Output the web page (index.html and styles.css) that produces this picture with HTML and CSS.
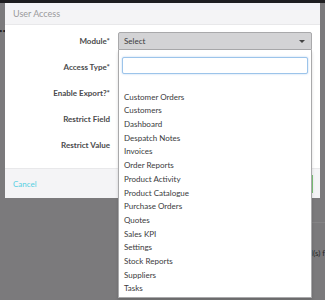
FILE: index.html
```html
<!DOCTYPE html>
<html>
<head>
<meta charset="utf-8">
<link rel="stylesheet" href="styles.css">
</head>
<body>
<div class="topbar"></div>
<div class="page-bg">
  <span class="bg-dots">••</span>
  <span class="bg-text">l(s) f</span>
  <div class="bg-line"></div>
</div>
<div class="modal">
  <div class="modal-header">User Access</div>
  <div class="modal-body">
    <div class="row">
      <label class="lbl">Module*</label>
      <div class="select"><span>Select</span><span class="caret"></span></div>
    </div>
    <div class="row">
      <label class="lbl">Access Type*</label>
      <div class="field"></div>
    </div>
    <div class="row">
      <label class="lbl">Enable Export?*</label>
      <div class="field"></div>
    </div>
    <div class="row">
      <label class="lbl">Restrict Field</label>
      <div class="field"></div>
    </div>
    <div class="row">
      <label class="lbl">Restrict Value</label>
      <div class="field"></div>
    </div>
  </div>
  <div class="modal-footer">
    <a class="cancel">Cancel</a>
    <button class="save">Save</button>
  </div>
  <div class="dropdown">
    <div class="search-wrap"><input class="search" type="text"></div>
    <ul class="options">
      <li>&nbsp;</li>
      <li>Customer Orders</li>
      <li>Customers</li>
      <li>Dashboard</li>
      <li>Despatch Notes</li>
      <li>Invoices</li>
      <li>Order Reports</li>
      <li>Product Activity</li>
      <li>Product Catalogue</li>
      <li>Purchase Orders</li>
      <li>Quotes</li>
      <li>Sales KPI</li>
      <li>Settings</li>
      <li>Stock Reports</li>
      <li>Suppliers</li>
      <li>Tasks</li>
    </ul>
  </div>
</div>
</body>
</html>
```
FILE: styles.css
```css
* { box-sizing: border-box; }
html, body {
  margin: 0;
  padding: 0;
  width: 325px;
  height: 300px;
  overflow: hidden;
  background: #7b7a7c;
  font-family: Lato, "Open Sans", sans-serif;
}
.topbar {
  height: 3px;
  background: #1e1e20;
}
.page-bg {
  position: absolute;
  inset: 3px 0 0 0;
}
.bg-dots {
  position: absolute;
  left: -1px;
  top: 24px;
  font-size: 6px;
  color: #222;
}
.bg-text {
  position: absolute;
  left: 311px;
  top: 245px;
  font-size: 8px;
  color: #2a2a2a;
  white-space: nowrap;
}
.bg-line {
  position: absolute;
  left: 312px;
  right: 0;
  top: 219px;
  height: 1px;
  background: #858486;
}
.modal {
  position: absolute;
  left: 5px;
  top: 3px;
  width: 315px;
  background: #fff;
}
.modal-header {
  height: 22px;
  background: #f4f4f6;
  border-bottom: 1px solid #e8e8ea;
  color: #9a9a9c;
  font-size: 9px;
  line-height: 21px;
  padding-left: 8px;
}
.modal-body {
  display: flex;
  flex-direction: column;
  gap: 8px;
  padding: 7px 8px 14px 0;
}
.row {
  display: flex;
  align-items: center;
  height: 18px;
}
.lbl {
  width: 105px;
  text-align: right;
  font-size: 8px;
  font-weight: 700;
  color: #4a4a4c;
  margin-right: 8px;
}
.select {
  flex: 1;
  height: 18px;
  background: #d3d3d5;
  border: 1px solid #a9a9ab;
  border-radius: 2px 2px 0 0;
  display: flex;
  align-items: center;
  justify-content: space-between;
  padding: 0 4px 0 5px;
  font-size: 8px;
  color: #3a3a3c;
}
.caret {
  width: 0;
  height: 0;
  border-left: 3px solid transparent;
  border-right: 3px solid transparent;
  border-top: 3px solid #444;
  margin-right: 2px;
}
.field {
  flex: 1;
  height: 18px;
  border: 1px solid #ccc;
}
.modal-footer {
  height: 30px;
  background: #f4f4f6;
  border-top: 1px solid #e8e8ea;
  display: flex;
  align-items: center;
  justify-content: space-between;
  padding: 0 7px 0 8px;
}
.cancel {
  color: #55d0e2;
  font-size: 8px;
}
.save {
  width: 50px;
  height: 18px;
  background: #8fd18b;
  border: 1px solid #7cc478;
  font-size: 8px;
  color: #fff;
}
.dropdown {
  position: absolute;
  left: 113px;
  top: 47px;
  width: 194px;
  height: 248px;
  background: #fff;
  border: 1px solid #a9a9ab;
  border-top: none;
  box-shadow: 0 2px 3px rgba(0,0,0,0.15);
  z-index: 5;
}
.search-wrap {
  padding: 7px 3px 3px 3px;
}
.search {
  display: block;
  width: 100%;
  height: 17px;
  border: 1px solid #9cc4ea;
  border-radius: 2px;
  box-shadow: 0 0 2px rgba(100,160,230,0.5);
  outline: none;
  margin: 0;
  padding: 0;
}
.options {
  list-style: none;
  margin: 0;
  padding: 0;
}
.options li {
  height: 13.7px;
  line-height: 13.7px;
  padding-left: 5px;
  font-size: 8px;
  color: #3a3a3c;
}
```
